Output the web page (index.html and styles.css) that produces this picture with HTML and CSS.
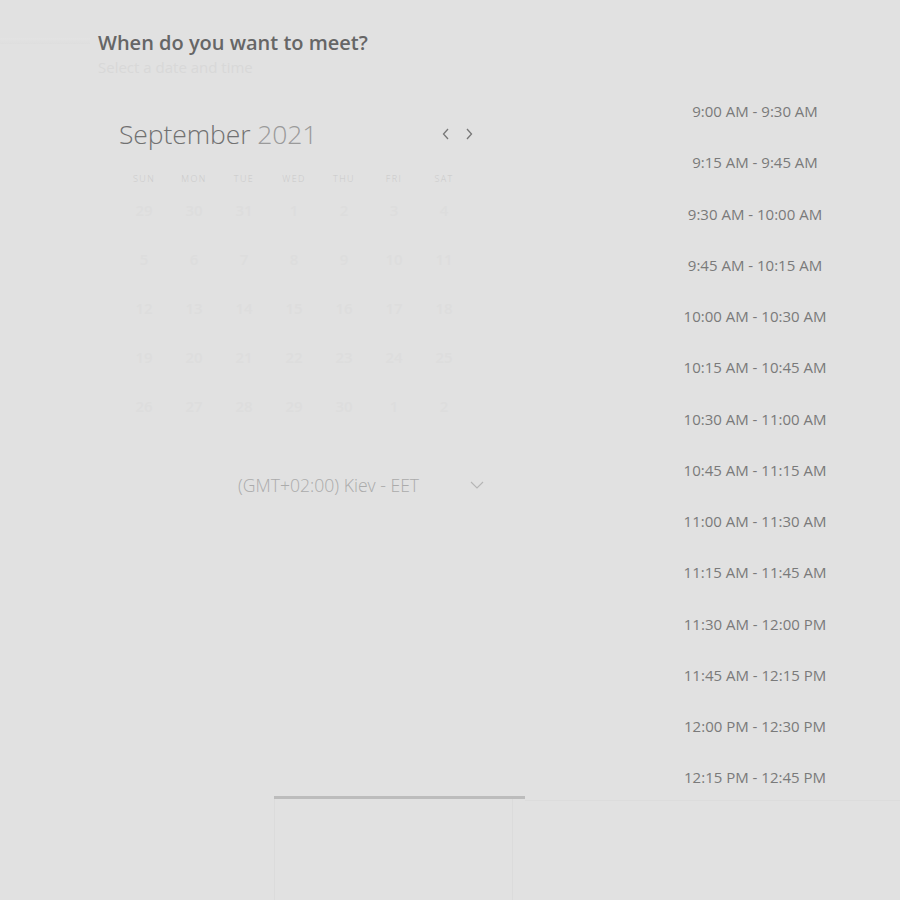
FILE: index.html
```html
<!DOCTYPE html>
<html lang="en">
<head>
<meta charset="utf-8">
<title>When do you want to meet?</title>
<link rel="stylesheet" href="styles.css">
</head>
<body>
<div class="page">
  <div class="main">
    <section class="left">
      <div class="strip"></div>
      <h1 class="title">When do you want to meet?</h1>
      <p class="subtitle">Select a date and time</p>
      <div class="calendar">
        <div class="cal-head">
          <div class="month"><span class="m">September</span> <span class="y">2021</span></div>
          <div class="nav">
            <svg class="arrow" viewBox="0 0 10 14" width="10" height="14"><path d="M7 2 L2.5 7 L7 12" fill="none" stroke="#777" stroke-width="1.3"/></svg>
            <svg class="arrow" viewBox="0 0 10 14" width="10" height="14"><path d="M3 2 L7.5 7 L3 12" fill="none" stroke="#777" stroke-width="1.3"/></svg>
          </div>
        </div>
        <div class="grid">
          <div class="dow">SUN</div><div class="dow">MON</div><div class="dow">TUE</div><div class="dow">WED</div><div class="dow">THU</div><div class="dow">FRI</div><div class="dow">SAT</div>
          <div class="day">29</div><div class="day">30</div><div class="day">31</div><div class="day">1</div><div class="day">2</div><div class="day">3</div><div class="day">4</div>
          <div class="day">5</div><div class="day">6</div><div class="day">7</div><div class="day">8</div><div class="day">9</div><div class="day">10</div><div class="day">11</div>
          <div class="day">12</div><div class="day">13</div><div class="day">14</div><div class="day">15</div><div class="day">16</div><div class="day">17</div><div class="day">18</div>
          <div class="day">19</div><div class="day">20</div><div class="day">21</div><div class="day">22</div><div class="day">23</div><div class="day">24</div><div class="day">25</div>
          <div class="day">26</div><div class="day">27</div><div class="day">28</div><div class="day">29</div><div class="day">30</div><div class="day">1</div><div class="day">2</div>
        </div>
        <div class="tz">
          <span class="tz-text">(GMT+02:00) Kiev - EET</span>
          <svg class="chev" viewBox="0 0 14 8" width="14" height="8"><path d="M1 1 L7 7 L13 1" fill="none" stroke="#b5b5b5" stroke-width="1.1"/></svg>
        </div>
      </div>
    </section>
    <section class="right">
      <ul class="slots">
        <li>9:00 AM - 9:30 AM</li>
        <li>9:15 AM - 9:45 AM</li>
        <li>9:30 AM - 10:00 AM</li>
        <li>9:45 AM - 10:15 AM</li>
        <li>10:00 AM - 10:30 AM</li>
        <li>10:15 AM - 10:45 AM</li>
        <li>10:30 AM - 11:00 AM</li>
        <li>10:45 AM - 11:15 AM</li>
        <li>11:00 AM - 11:30 AM</li>
        <li>11:15 AM - 11:45 AM</li>
        <li>11:30 AM - 12:00 PM</li>
        <li>11:45 AM - 12:15 PM</li>
        <li>12:00 PM - 12:30 PM</li>
        <li>12:15 PM - 12:45 PM</li>
      </ul>
    </section>
  </div>
  <div class="footer">
    <div class="bar"><div class="box"></div></div>
    <div class="rule"></div>
  </div>
</div>
</body>
</html>
```

FILE: styles.css
```css
* { box-sizing: border-box; }
html, body { margin: 0; padding: 0; }
body {
  background: #e1e1e1;
  font-family: "Open Sans", "Liberation Sans", sans-serif;
  width: 900px;
  height: 900px;
  overflow: hidden;
}
.page { display: flex; flex-direction: column; }
.main { display: flex; height: 796px; }
.left { width: 610px; position: relative; padding-left: 98px; padding-top: 29px; }
.strip {
  position: absolute; left: 0; top: 38px; width: 90px; height: 6px;
  background: linear-gradient(#e3e3e3, #dedede);
}
.title {
  margin: 0; font-size: 20px; font-weight: 600; color: #666; line-height: 27px;
}
.subtitle {
  margin: 2px 0 0; font-size: 15px; font-weight: 400; color: #d8d8d8; line-height: 19px;
}
.calendar { width: 392px; margin-left: 21px; margin-top: 39px; }
.cal-head { display: flex; align-items: center; justify-content: space-between; height: 36px; padding-right: 37px; }
.month { font-size: 26.5px; font-weight: 300; line-height: 36px; letter-spacing: -0.1px; }
.month .m { color: #717171; }
.month .y { color: #9a9a9a; }
.nav { display: flex; gap: 13px; }
.arrow { display: block; }
.grid {
  display: grid; grid-template-columns: repeat(7, 50px); width: 350px; margin-top: 19px;
}
.dow {
  height: 15px; line-height: 15px; text-align: center; font-size: 9px; font-weight: 300; color: #c9c9c9; letter-spacing: 1.4px;
}
.day {
  height: 49px; line-height: 49px; text-align: center; font-size: 15px; color: #dddddd; font-weight: 600;
}
.tz {
  display: flex; align-items: center; margin-top: 39px; padding-left: 119px; padding-right: 27px; height: 30px;
}
.tz-text { font-size: 17.6px; color: #ababab; font-weight: 300; }
.chev { margin-left: auto; }
.right { width: 290px; padding-top: 86px; }
.slots { list-style: none; margin: 0; padding: 0; }
.slots li {
  height: 51.25px; line-height: 51.25px; text-align: center; font-size: 15px; color: #7a7a7a;
}
.footer { display: flex; height: 104px; }
.bar { margin-left: 274px; width: 251px; border-top: 3px solid #bcbcbc; }
.box { width: 239px; height: 100%; border-left: 1px solid #dbdbdb; border-right: 1px solid #dbdbdb; }
.rule { flex: 1; border-top: 1px solid #dcdcdc; margin-top: 4px; }
```
